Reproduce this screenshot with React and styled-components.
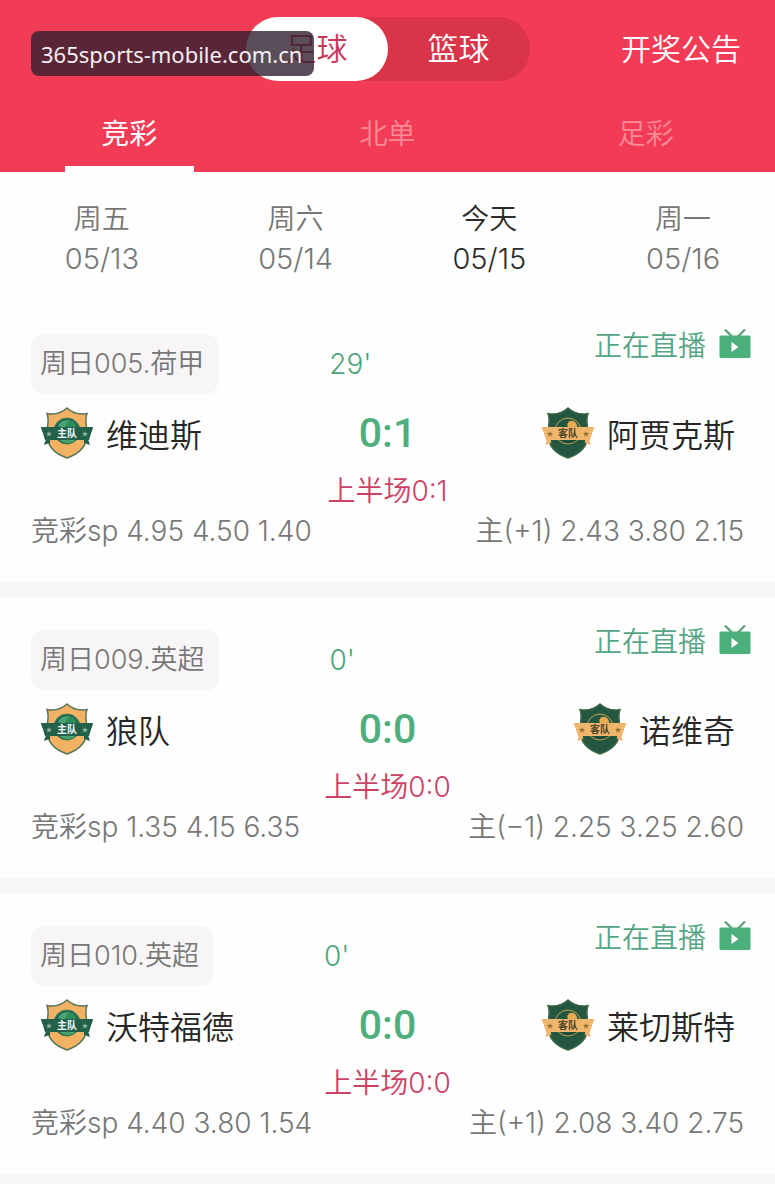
import React, { useState } from 'react'
import styled, { createGlobalStyle } from 'styled-components'

const SPORTS = ['足球', '篮球']
const TABS = ['竞彩', '北单', '足彩']

const DAYS = [
    { week: '周五', date: '05/13' },
    { week: '周六', date: '05/14' },
    { week: '今天', date: '05/15' },
    { week: '周一', date: '05/16' },
]

const MATCHES = [
    {
        id: '周日005.荷甲', minute: "29'", home: '维迪斯', away: '阿贾克斯',
        score: '0:1', half: '0:1', sp: '4.95 4.50 1.40', handicap: '主(+1) 2.43 3.80 2.15',
    },
    {
        id: '周日009.英超', minute: "0'", home: '狼队', away: '诺维奇',
        score: '0:0', half: '0:0', sp: '1.35 4.15 6.35', handicap: '主(−1) 2.25 3.25 2.60',
    },
    {
        id: '周日010.英超', minute: "0'", home: '沃特福德', away: '莱切斯特',
        score: '0:0', half: '0:0', sp: '4.40 3.80 1.54', handicap: '主(+1) 2.08 3.40 2.75',
    },
]

const TvIcon = () => (
    <svg width="32" height="30" viewBox="0 0 32 30" aria-hidden="true">
        <path d="M6 0.500L13.500 8M26 0.500L18.500 8" stroke="#5c9a7c" strokeWidth="2.200" fill="none" />
        <rect x="0.500" y="6.500" width="31" height="22.500" rx="1.500" fill="#4bb07b" />
        <path d="M12.500 13V23L19.500 18Z" fill="#fff" />
    </svg>
)

const Crest = ({ away }) => {
    const shield = away ? '#24573f' : '#f2b264'
    const ribbon = away ? '#efb56c' : '#23604a'
    const label = away ? '#4b4526' : '#f4f7ee'
    return (
        <svg width="54" height="52" viewBox="0 0 54 52" aria-hidden="true">
            <path
                d="M27 1C22 5.500 14.500 8 7 6.500C9.500 12 7.500 17 7 26C6.500 40 15 47 27 51C39 47 47.500 40 47 26C46.500 17 44.500 12 47 6.500C39.500 8 32 5.500 27 1Z"
                fill={shield} stroke={away ? '#3f6647' : '#55745a'} strokeWidth="1.500"
            />
            <circle cx="27" cy="24" r="13" fill={away ? '#24573f' : '#1f6b4d'} stroke={away ? '#c99a55' : '#3f7a55'} strokeWidth="1" />
            <path d="M18 19C21 12.500 29 12 33 15C31 18 27 17 25 20C22 21 20 20 18 19Z" fill={away ? '#24573f' : '#4ba36f'} />
            <path d="M28 14.500C32 12 37 16 36 21H27C26 18 26 16 28 14.500Z" fill={away ? '#e9a955' : '#2f8a5c'} />
            <path d="M20 33H35C33 37 22 37 20 33Z" fill={away ? '#1d4c38' : '#4ba36f'} />
            <path d="M1 21L10 24V36L4 38L6 32Z M53 21L44 24V36L50 38L48 32Z" fill={ribbon} />
            <path d="M1 20H53L49 33H5Z" fill={ribbon} />
            <path
                d="M9 24L9.800 26H12L10.300 27.200L11 29.500L9 28.200L7 29.500L7.700 27.200L6 26H8.200ZM45 24L45.800 26H48L46.300 27.200L47 29.500L45 28.200L43 29.500L43.700 27.200L42 26H44.200Z"
                fill={away ? '#8a6a30' : '#8fb89a'}
            />
            <text x="27" y="30" textAnchor="middle" fontSize="10" fontWeight="700" fill={label}>
                {away ? '客队' : '主队'}
            </text>
        </svg>
    )
}

const Match = ({ match }) => (
    <MatchCard>
        <MatchTop>
            <League>{match.id}</League>
            <Minute>{match.minute}</Minute>
            <Live href="#live">正在直播<TvIcon /></Live>
        </MatchTop>
        <Teams>
            <Team><Crest />{match.home}</Team>
            <Score>{match.score}</Score>
            <Team $away><Crest away />{match.away}</Team>
        </Teams>
        <Half>上半场{match.half}</Half>
        <Odds>
            <span>竞彩sp {match.sp}</span>
            <span>{match.handicap}</span>
        </Odds>
    </MatchCard>
)

const App = () => {
    const [sport, setSport] = useState(0)
    const [tab, setTab] = useState(0)
    const [day, setDay] = useState(2)

    return (
        <>
            <GlobalStyle />
            <Header>
                <TopBar>
                    <Switch>
                        {SPORTS.map((name, i) => (
                            <SwitchButton key={name} $active={i === sport} onClick={() => setSport(i)}>{name}</SwitchButton>
                        ))}
                    </Switch>
                    <Notice href="#notice">开奖公告</Notice>
                </TopBar>
                <Tabs>
                    {TABS.map((name, i) => (
                        <Tab key={name} $active={i === tab} onClick={() => setTab(i)}>{name}</Tab>
                    ))}
                </Tabs>
                <SiteLabel>365sports-mobile.com.cn</SiteLabel>
            </Header>
            <Days>
                {DAYS.map((d, i) => (
                    <Day key={d.date} $active={i === day} onClick={() => setDay(i)}>
                        <span>{d.week}</span>
                        <DayDate>{d.date}</DayDate>
                    </Day>
                ))}
            </Days>
            <MatchList>
                {MATCHES.map(m => <Match key={m.id} match={m} />)}
            </MatchList>
        </>
    )
}

const cjk = '"Noto Sans CJK SC", sans-serif'

const GlobalStyle = createGlobalStyle`
    * {
        box-sizing: border-box;
    }
    body {
        margin: 0;
        background: #f7f5f6;
        color: #777;
        font-family: Inter, ${cjk};
        font-size: 28px;
        font-weight: 350;
        line-height: 40px;
    }
    button {
        border: 0;
        padding: 0;
        background: none;
        color: inherit;
        font: inherit;
        cursor: pointer;
    }
    a {
        color: inherit;
        text-decoration: none;
    }
    svg {
        flex: none;
    }
`;

const Header = styled.header`
    position: relative;
    background: #f23c56;
    color: #fff;
`;

const TopBar = styled.div`
    display: grid;
    grid-template-columns: 1fr auto 1fr;
    align-items: center;
    padding: 17px 34px 13px;
`;

const Switch = styled.div`
    grid-column: 2;
    display: flex;
    border-radius: 32px;
    background: #d93448;
`;

const SwitchButton = styled.button`
    width: 142px;
    height: 64px;
    border-radius: 32px;
    background: ${props => props.$active ? '#fff' : 'transparent'};
    color: ${props => props.$active ? '#c8375a' : '#fff'};
    font-size: 31px;
`;

const Notice = styled.a`
    justify-self: end;
    font-size: 30px;
`;

const Tabs = styled.nav`
    display: flex;
    font-family: ${cjk};
`;

const Tab = styled.button`
    flex: 1;
    display: flex;
    flex-direction: column;
    align-items: center;
    justify-content: space-between;
    height: 78px;
    padding-top: 18px;
    color: ${props => props.$active ? '#fff' : '#f98b98'};
    font-weight: ${props => props.$active ? 400 : 350};

    &::after {
        content: '';
        width: 50%;
        height: 6px;
        background: ${props => props.$active ? '#fff' : 'transparent'};
    }
`;

/* floats over the switch */
const SiteLabel = styled.div`
    position: absolute;
    top: 31px;
    left: 31px;
    padding: 3px 12px 2px 10px;
    border-radius: 8px;
    background: rgba(50, 32, 48, 0.8);
    color: #f3eef2;
    font-family: "Noto Sans", sans-serif;
    font-size: 22px;
    font-weight: 400;
`;

const Days = styled.div`
    display: flex;
    padding: 27px 0 22px;
    background: #fdfefd;
`;

const Day = styled.button`
    flex: 1;
    display: flex;
    flex-direction: column;
    align-items: center;
    padding-left: 10px;
    color: ${props => props.$active ? '#2c2c2c' : '#777'};
`;

const DayDate = styled.span`
    font-size: 29px;
`;

const MatchList = styled.main`
    display: flex;
    flex-direction: column;
    gap: 15px;
`;

const MatchCard = styled.article`
    padding: 23px 31px 31px;
    background: #fdfefd;
`;

const MatchTop = styled.div`
    display: flex;
    align-items: flex-start;
    margin-right: -7px;
`;

const League = styled.span`
    margin-top: 10px;
    padding: 10px 14px 10px 9px;
    border-radius: 12px;
    background: #f8f5f6;
    font-size: 27px;
`;

const Minute = styled.span`
    margin: 20px auto 0 111px;
    color: #4fa57c;
`;

const Live = styled.a`
    display: flex;
    align-items: center;
    gap: 13px;
    color: #56a582;
    font-family: ${cjk};
`;

const Teams = styled.div`
    display: grid;
    grid-template-columns: 1fr auto 1fr;
    align-items: center;
    padding: 13px 9px 12px;
`;

const Team = styled.div`
    display: flex;
    align-items: center;
    justify-content: ${props => props.$away ? 'flex-end' : 'flex-start'};
    gap: 12px;
    color: #262626;
    font-family: ${cjk};
    font-size: 32px;
`;

const Score = styled.strong`
    color: #4fae7d;
    font-family: Roboto, sans-serif;
    font-size: 41px;
    font-weight: 500;
    line-height: 44px;
`;

const Half = styled.div`
    color: #cc4265;
    text-align: center;
`;

const Odds = styled.div`
    display: flex;
    justify-content: space-between;
`;

export default App
